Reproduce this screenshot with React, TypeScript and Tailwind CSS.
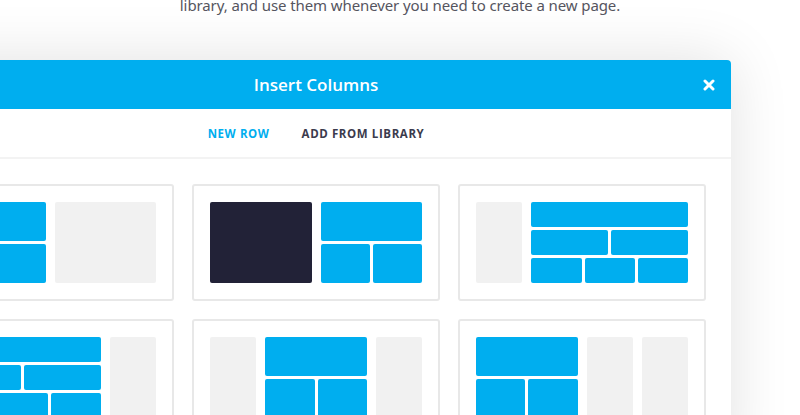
import React from "react";

type Cell = { span: number; kind: "blue" | "dark" | "gray"; rows?: number[][] };

const layouts: Cell[][] = [
	[
		{ span: 2, kind: "blue", rows: [[1, 1], [1, 1]] },
		{ span: 2, kind: "gray" },
	],
	[
		{ span: 2, kind: "dark" },
		{ span: 2, kind: "blue", rows: [[1], [1, 1]] },
	],
	[
		{ span: 1, kind: "gray" },
		{ span: 3, kind: "blue", rows: [[1], [1, 1], [1, 1, 1]] },
	],
	[
		{ span: 3, kind: "blue", rows: [[1], [1, 1], [1, 1, 1]] },
		{ span: 1, kind: "gray" },
	],
	[
		{ span: 1, kind: "gray" },
		{ span: 2, kind: "blue", rows: [[1], [1, 1]] },
		{ span: 1, kind: "gray" },
	],
	[
		{ span: 2, kind: "blue", rows: [[1], [1, 1]] },
		{ span: 1, kind: "gray" },
		{ span: 1, kind: "gray" },
	],
];

const spanClass: Record<number, string> = {
	1: "col-span-1",
	2: "col-span-2",
	3: "col-span-3",
	4: "col-span-4",
};

const Block = ({ cell }: { cell: Cell }) => {
	if (cell.kind === "dark") {
		return <div className={`${spanClass[cell.span]} rounded-[2px] bg-[#222237]`} />;
	}
	if (cell.kind === "gray") {
		return <div className={`${spanClass[cell.span]} rounded-[2px] bg-[#f1f1f1]`} />;
	}
	return (
		<div className={`${spanClass[cell.span]} flex flex-col gap-[3px]`}>
			{cell.rows!.map((row, i) => (
				<div key={i} className="flex flex-1 gap-[3px]">
					{row.map((_, j) => (
						<div key={j} className="flex-1 rounded-[2px] bg-[#00aeef]" />
					))}
				</div>
			))}
		</div>
	);
};

const LayoutCard = ({ cells }: { cells: Cell[] }) => (
	<div className="rounded-[3px] border-2 border-[#e8e8e8] bg-white p-4">
		<div className="grid h-[81px] grid-cols-4 gap-[9px]">
			{cells.map((c, i) => (
				<Block key={i} cell={c} />
			))}
		</div>
	</div>
);

export default function App() {
	return (
		<div
			className="relative h-[415px] w-[800px] overflow-hidden bg-white"
			style={{ fontFamily: '"Open Sans", "Noto Sans", sans-serif' }}
		>
			<p
				className="-mt-[5px] h-[65px] text-center text-[15px] leading-[20px] text-[#555560]"
				style={{ fontFamily: '"Noto Sans", sans-serif', letterSpacing: "-0.1px" }}
			>
				library, and use them whenever you need to create a new page.
			</p>

			<div className="ml-[-99px] w-[830px] rounded-t-[4px] bg-white shadow-[0_0_60px_rgba(0,0,0,0.12)]">
				<div className="relative flex h-[49px] items-center justify-center rounded-t-[4px] bg-[#00aeef]">
					<h2 className="text-[17px] font-semibold text-white">Insert Columns</h2>
					<button className="absolute right-[16px] top-[19px] text-white">
						<svg width="12" height="12" viewBox="0 0 12 12">
							<path
								d="M2 2L10 10M10 2L2 10"
								stroke="currentColor"
								strokeWidth="3"
								strokeLinecap="round"
							/>
						</svg>
					</button>
				</div>

				<div className="flex h-[50px] items-center justify-center gap-[32px] border-b-2 border-[#f3f3f3] pt-[2px] text-[11.5px] font-bold tracking-[0.6px]">
					<span className="text-[#00aeef]">NEW ROW</span>
					<span className="text-[#3b3b4d]">ADD FROM LIBRARY</span>
				</div>

				<div className="grid grid-cols-3 gap-[18px] px-[25px] pt-[25px] pb-[30px]">
					{layouts.map((l, i) => (
						<LayoutCard key={i} cells={l} />
					))}
				</div>
			</div>
		</div>
	);
}
